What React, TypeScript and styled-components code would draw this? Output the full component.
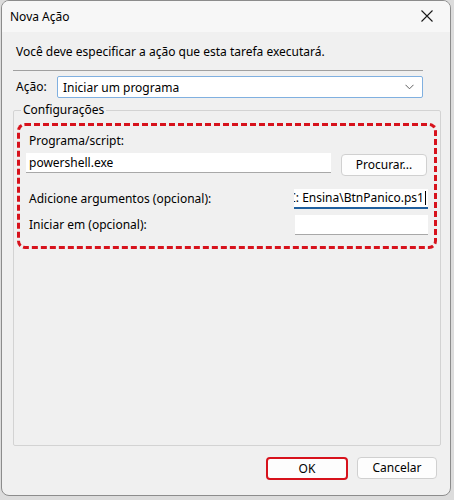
import React from "react";
import styled, { createGlobalStyle } from "styled-components";

const Global = createGlobalStyle`
  html, body { margin: 0; padding: 0; background: #dcdcdc; }
  body {
    font-family: "Segoe UI", "Noto Sans", "Open Sans", sans-serif;
    font-size: 12px;
    color: #000;
  }
`;

const Window = styled.div`
  margin-left: 1px;
  width: 450px;
  height: 496px;
  box-sizing: border-box;
  border: 1px solid #8c8c8c;
  border-radius: 8px;
  background: #f0f0f0;
  display: flex;
  flex-direction: column;
  overflow: hidden;
`;

const TitleBar = styled.div`
  height: 31px;
  flex: none;
  display: flex;
  align-items: center;
  justify-content: space-between;
  background: #f7f7f7;
  padding-left: 8px;
`;

const Title = styled.span`
  font-size: 12px;
  line-height: 16px;
`;

const CloseBox = styled.div`
  width: 46px;
  height: 31px;
  display: flex;
  align-items: center;
  justify-content: center;
  margin-top: -2px;
`;

const Body = styled.div`
  flex: 1;
  display: flex;
  flex-direction: column;
  padding: 12px 9px 0 11px;
`;

const Instruction = styled.div`
  line-height: 16px;
  padding-left: 3px;
`;

const Separator = styled.div`
  width: 410px;
  height: 1px;
  background: #a0a0a0;
  margin-top: 10px;
`;

const ActionRow = styled.div`
  display: flex;
  align-items: center;
  margin-top: 5px;
  width: 410px;
`;

const ActionLabel = styled.span`
  width: 44px;
  padding-left: 3px;
  box-sizing: border-box;
  line-height: 16px;
`;

const Select = styled.div`
  flex: 1;
  height: 22px;
  box-sizing: border-box;
  border: 1px solid #80b0e0;
  border-radius: 2px;
  background: #fff;
  display: flex;
  align-items: center;
  justify-content: space-between;
  padding: 0 8px 0 5px;
`;

const Group = styled.fieldset`
  margin: 4px 0 0 0;
  border: 1px solid #d3d3d3;
  border-radius: 2px;
  padding: 0 3px 0 3px;
  height: 344px;
  box-sizing: border-box;
  min-width: 0;
`;

const Legend = styled.legend`
  margin-left: 4px;
  padding: 0 2px;
  line-height: 16px;
`;

const Highlight = styled.div`
  margin-top: 5px;
  border: 3px dashed #d7121c;
  border-radius: 8px;
  padding: 7px 6px 11px 6px;
  display: flex;
  flex-direction: column;
`;

const FieldLabel = styled.span`
  padding-left: 3px;
  line-height: 16px;
`;

const InputRow = styled.div`
  display: flex;
  align-items: flex-start;
  justify-content: space-between;
  margin-top: 4px;
`;

const TextBox = styled.div<{ $width: number; $active?: boolean }>`
  width: ${(p) => p.$width}px;
  height: 20px;
  box-sizing: border-box;
  background: #fff;
  border-bottom: ${(p) => (p.$active ? "2px solid #1f5f9e" : "1px solid #a8a8a8")};
  display: flex;
  align-items: center;
  justify-content: ${(p) => (p.$active ? "flex-end" : "flex-start")};
  padding: 0 2px 0 3px;
  overflow: hidden;
  white-space: nowrap;
  line-height: 16px;
`;

const Caret = styled.span`
  display: inline-block;
  width: 1px;
  height: 14px;
  background: #000;
  margin-left: 1px;
  flex: none;
`;

const Clip = styled.span`
  flex: none;
`;

const ButtonBox = styled.div<{ $width: number; $danger?: boolean }>`
  width: ${(p) => p.$width}px;
  height: ${(p) => (p.$danger ? 23 : 22)}px;
  box-sizing: border-box;
  border: ${(p) => (p.$danger ? "2px solid #d7121c" : "1px solid #d0d0d0")};
  border-radius: 4px;
  background: #fdfdfd;
  display: flex;
  align-items: center;
  justify-content: center;
  line-height: 16px;
`;

const BrowseButton = styled(ButtonBox)`
  margin-top: 1px;
  margin-right: 1px;
`;

const FieldRow = styled.div<{ $top: number }>`
  display: flex;
  align-items: center;
  justify-content: space-between;
  margin-top: ${(p) => p.$top}px;
`;

const Footer = styled.div`
  display: flex;
  justify-content: flex-end;
  gap: 9px;
  padding: 11px 13px 0 0;
  margin-right: -9px;
`;

const CloseIcon = () => (
  <svg width="12" height="12" viewBox="0 0 12 12">
    <path d="M0.5 0.5 L11.5 11.5 M11.5 0.5 L0.5 11.5" stroke="#1a1a1a" strokeWidth="1.1" fill="none" />
  </svg>
);

const Chevron = () => (
  <svg width="9" height="6" viewBox="0 0 9 6">
    <path d="M0.5 0.8 L4.5 4.8 L8.5 0.8" stroke="#606060" strokeWidth="1" fill="none" />
  </svg>
);

export default function App() {
  return (
    <>
      <Global />
      <Window>
        <TitleBar>
          <Title>Nova Ação</Title>
          <CloseBox>
            <CloseIcon />
          </CloseBox>
        </TitleBar>
        <Body>
          <Instruction>Você deve especificar a ação que esta tarefa executará.</Instruction>
          <Separator />
          <ActionRow>
            <ActionLabel>Ação:</ActionLabel>
            <Select>
              <span>Iniciar um programa</span>
              <Chevron />
            </Select>
          </ActionRow>
          <Group>
            <Legend>Configurações</Legend>
            <Highlight>
              <FieldLabel>Programa/script:</FieldLabel>
              <InputRow>
                <TextBox $width={305}>powershell.exe</TextBox>
                <BrowseButton $width={86}>Procurar...</BrowseButton>
              </InputRow>
              <FieldRow $top={13}>
                <FieldLabel>Adicione argumentos (opcional):</FieldLabel>
                <TextBox $width={134} $active>
                  <Clip>-File "C: Ensina\BtnPanico.ps1</Clip>
                  <Caret />
                </TextBox>
              </FieldRow>
              <FieldRow $top={6}>
                <FieldLabel>Iniciar em (opcional):</FieldLabel>
                <TextBox $width={133} />
              </FieldRow>
            </Highlight>
          </Group>
          <Footer>
            <ButtonBox $width={82} $danger>OK</ButtonBox>
            <ButtonBox $width={80}>Cancelar</ButtonBox>
          </Footer>
        </Body>
      </Window>
    </>
  );
}
